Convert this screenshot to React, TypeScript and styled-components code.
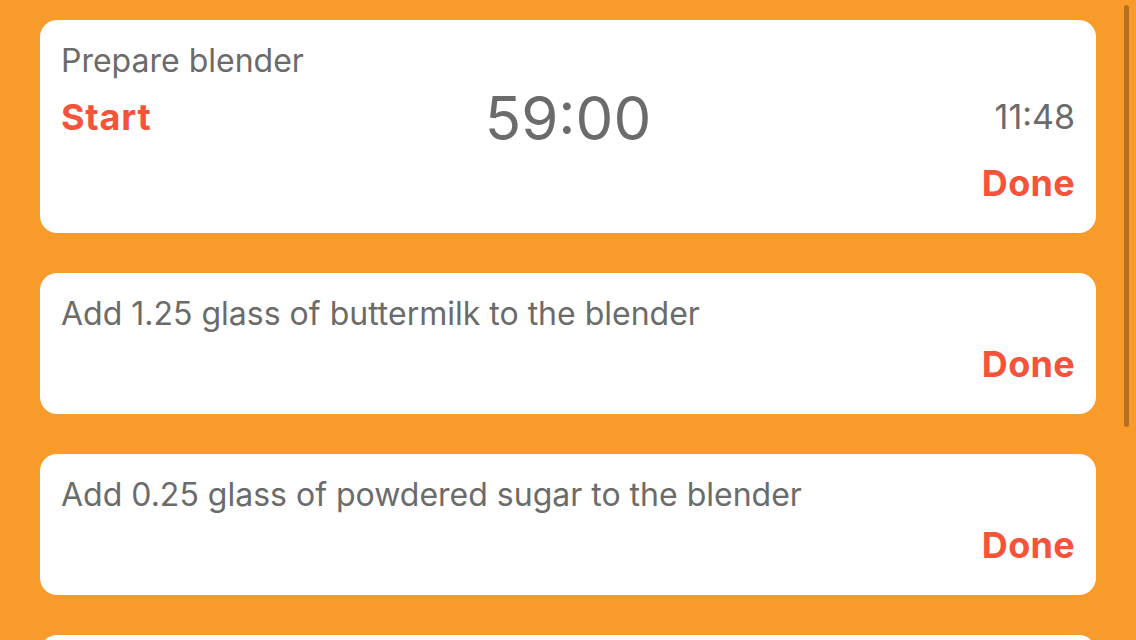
import React from "react";
import styled, { createGlobalStyle } from "styled-components";

const Global = createGlobalStyle`
  html, body { margin: 0; padding: 0; background: #F99B2A; height: 640px; overflow: hidden; }
  body { font-family: Inter, "Noto Sans", sans-serif; }
`;

const Page = styled.div`
  position: relative;
  height: 640px;
  overflow: hidden;
  padding: 20px 40px 0 40px;
  box-sizing: border-box;
  display: flex;
  flex-direction: column;
  gap: 40px;
`;

const Card = styled.div<{ $h: number }>`
  background: #fff;
  border-radius: 17px;
  height: ${(p) => p.$h}px;
  flex: 0 0 auto;
  box-sizing: border-box;
  padding: 21px 21px 0 21px;
  display: flex;
  flex-direction: column;
`;

const Title = styled.div`
  font-size: 32px;
  line-height: 40px;
  color: #6b6b6b;
  white-space: nowrap;
`;

const TimerRow = styled.div`
  display: grid;
  grid-template-columns: 1fr auto 1fr;
  align-items: center;
  height: 76px;
  margin-top: -1px;
`;

const Action = styled.div`
  font-size: 36px;
  font-weight: 700;
  color: #F5533A;
  line-height: 44px;
  letter-spacing: 0.3px;
`;

const StartAction = styled(Action)`
  margin-top: -3px;
  letter-spacing: 0.8px;
`;

const Timer = styled.div`
  font-size: 60px;
  line-height: 76px;
  color: #6b6b6b;
`;

const Clock = styled.div`
  justify-self: end;
  font-size: 34px;
  line-height: 40px;
  margin-top: -2px;
  color: #6b6b6b;
`;

const DoneRow = styled.div<{ $mt: number }>`
  display: flex;
  justify-content: flex-end;
  margin-top: ${(p) => p.$mt}px;
`;

const ScrollBar = styled.div`
  position: absolute;
  right: 7px;
  top: 5px;
  width: 5px;
  height: 422px;
  border-radius: 3px;
  background: #B86E1E;
`;

const steps = [
  "Add 1.25 glass of buttermilk to the blender",
  "Add 0.25 glass of powdered sugar to the blender",
  "Add 1 glass of ice to the blender",
];

export default function App() {
  return (
    <>
      <Global />
      <Page>
        <Card $h={213}>
          <Title>Prepare blender</Title>
          <TimerRow>
            <StartAction>Start</StartAction>
            <Timer>59:00</Timer>
            <Clock>11:48</Clock>
          </TimerRow>
          <DoneRow $mt={5}>
            <Action>Done</Action>
          </DoneRow>
        </Card>
        {steps.map((s) => (
          <Card $h={141} key={s}>
            <Title>{s}</Title>
            <DoneRow $mt={8}>
              <Action>Done</Action>
            </DoneRow>
          </Card>
        ))}
        <ScrollBar />
      </Page>
    </>
  );
}
